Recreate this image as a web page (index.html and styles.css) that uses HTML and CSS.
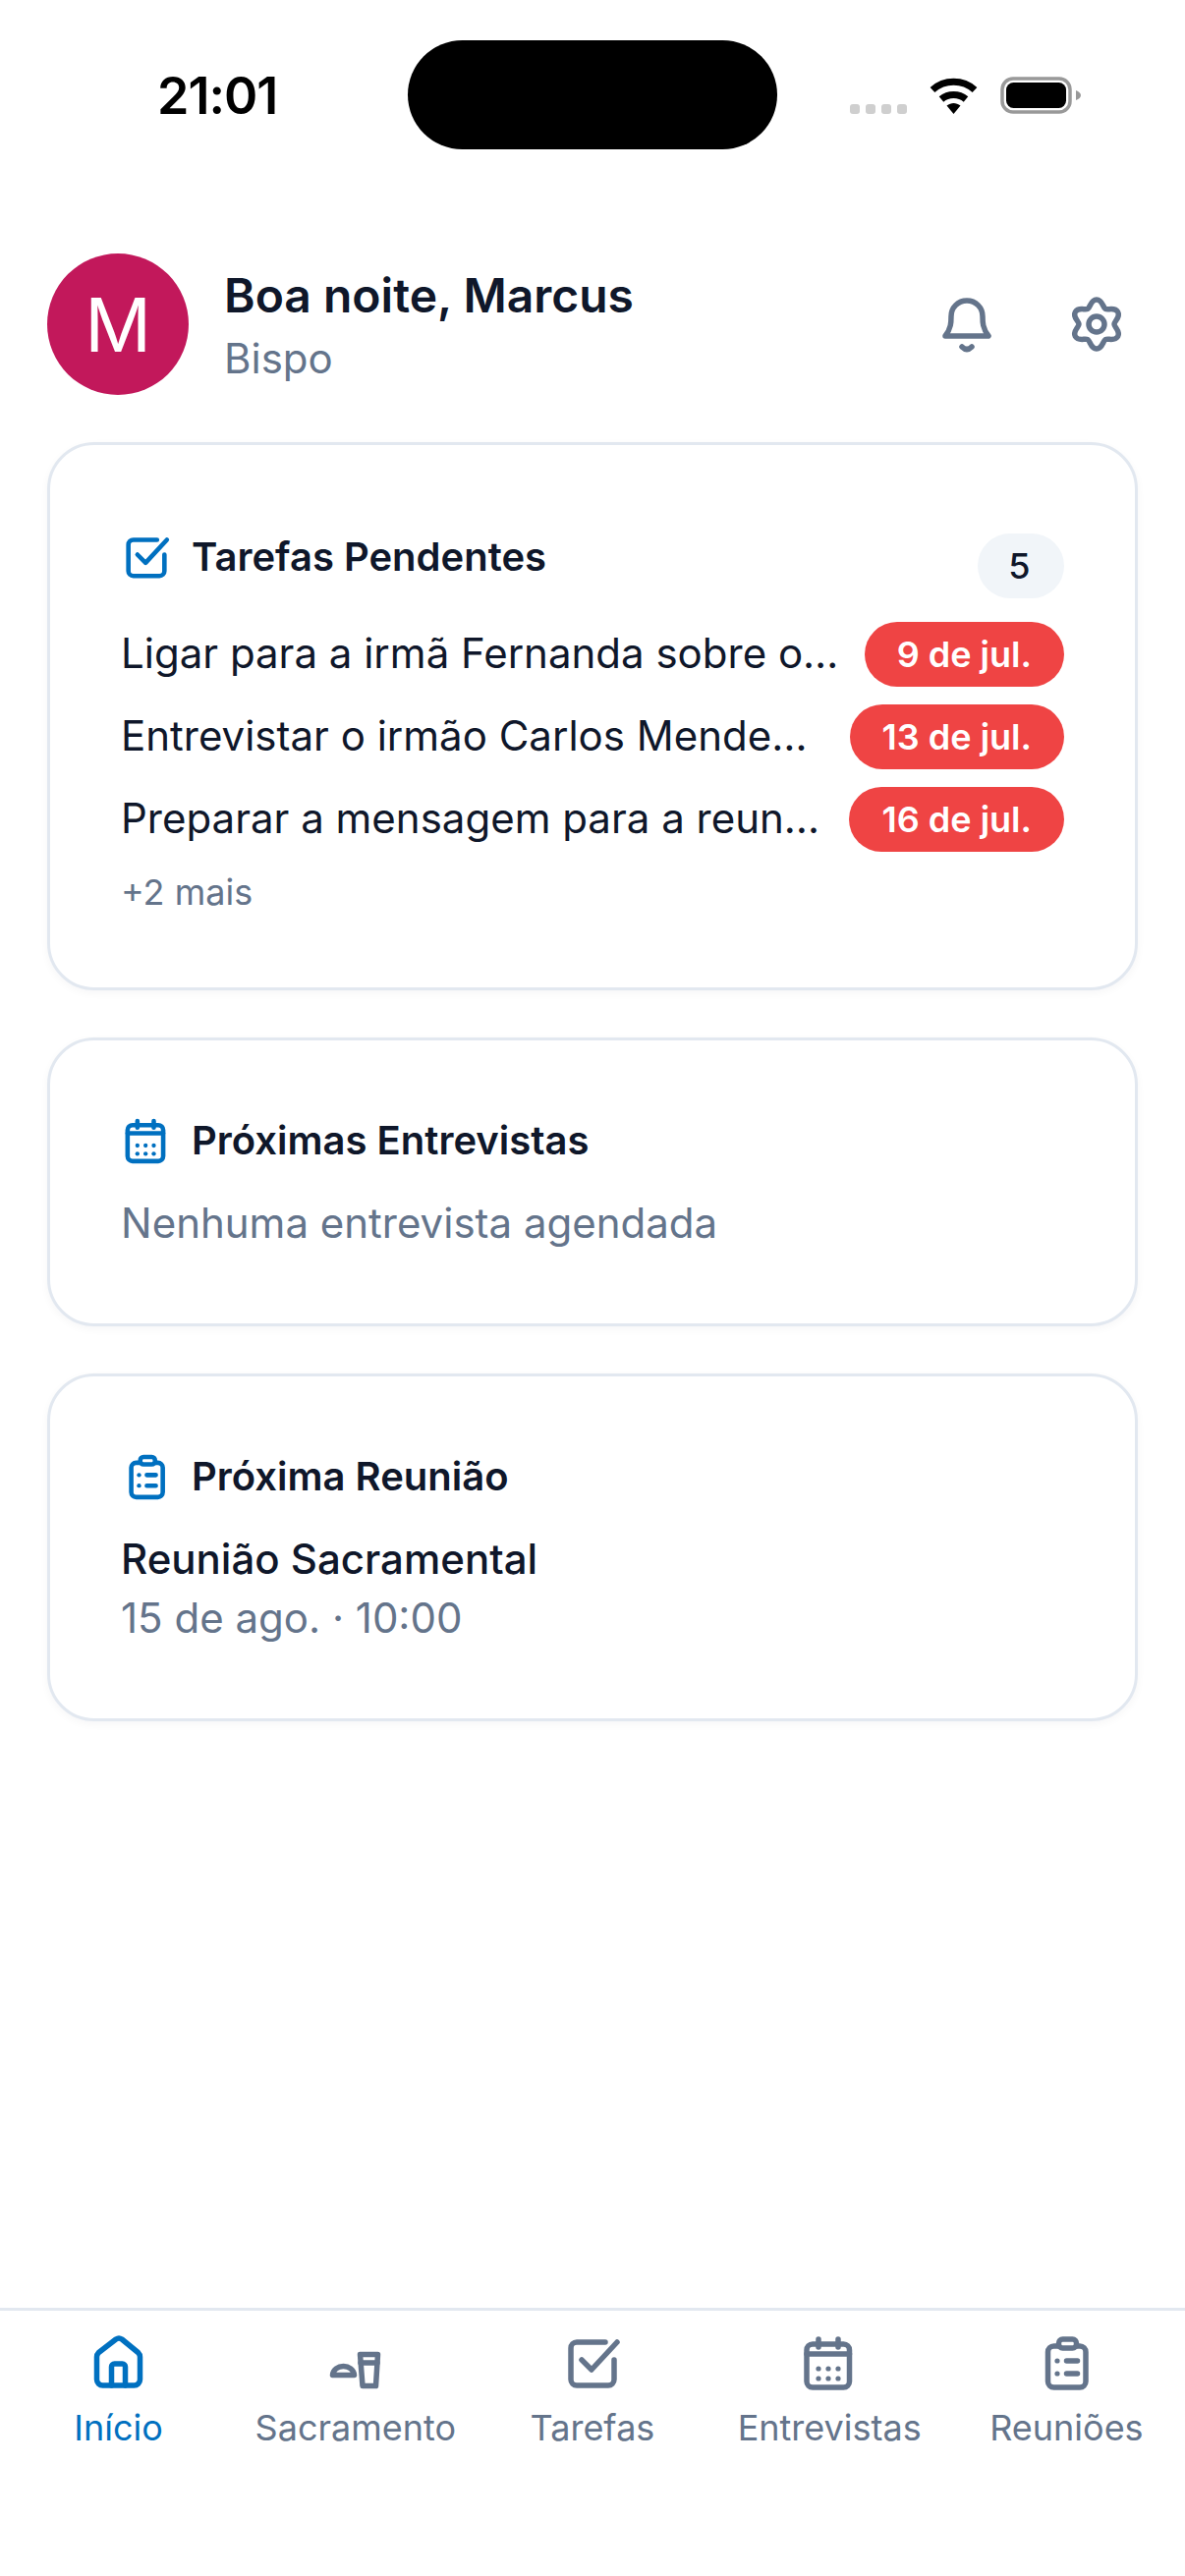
FILE: index.html
```html
<!DOCTYPE html>
<html lang="pt">
<head>
<meta charset="utf-8">
<title>Início</title>
<link rel="stylesheet" href="styles.css">
</head>
<body>
<svg class="sprite" xmlns="http://www.w3.org/2000/svg">
  <symbol id="i-home" viewBox="0 0 72 72"><path d="M13.5 30Q13.5 27.5 15.5 25.5L33 12Q36 10 39 12L55.5 25.5Q57.5 27.5 57.5 30V53A6 6 0 0 1 51.5 59H19.5A6 6 0 0 1 13.5 53Z"/><path d="M28.5 59V40A3 3 0 0 1 31.5 37H39.5A3 3 0 0 1 42.5 40V59"/></symbol>
  <symbol id="i-sacrament" viewBox="0 0 72 72"><path d="M12.5 48.5H34.5C34 43 29 39.5 23.5 39.5C18 39.5 13 43 12.5 48.5Z"/><path d="M40.5 27.5H58.5L56.5 59.5H43Z"/><path d="M41 36H58"/></symbol>
  <symbol id="i-check" viewBox="0 0 72 72"><path d="M49 15H20A6 6 0 0 0 14 21V53A6 6 0 0 0 20 59H52A6 6 0 0 0 58 53V33"/><path d="M25 33L35 43L61 15"/></symbol>
  <symbol id="i-calendar" viewBox="0 0 72 72"><rect x="13" y="17" width="43.5" height="44" rx="6"/><path d="M13 27H56.5M25 12V20M45 12V20"/><g class="dots"><circle cx="25" cy="42" r="2.6"/><circle cx="35" cy="42" r="2.6"/><circle cx="45" cy="42" r="2.6"/><circle cx="25" cy="52" r="2.6"/><circle cx="35" cy="52" r="2.6"/><circle cx="45" cy="52" r="2.6"/></g></symbol>
  <symbol id="i-clipboard" viewBox="0 0 72 72"><path d="M28 19H23.5A6 6 0 0 0 17.5 25V55A6 6 0 0 0 23.5 61H50A6 6 0 0 0 56 55V25A6 6 0 0 0 50 19H47"/><rect x="28.5" y="12" width="18" height="9" rx="4"/><path d="M36.5 34H47.5M36.5 47H47.5"/><g class="dots"><circle cx="27" cy="34" r="2.6"/><circle cx="27" cy="47" r="2.6"/></g></symbol>
</svg>

<div class="screen">
  <div class="status">
    <span class="clock">21:01</span>
    <span class="island"></span>
    <span class="sys">
      <span class="signal"><i></i><i></i><i></i><i></i></span>
      <svg class="wifi" viewBox="0 0 51 38"><path class="wifi-arc" d="M4 13.500C16 2.500 35 2.500 47 13.500"/><path class="wifi-arc" d="M13 23C20 17 31 17 38 23"/><path class="wifi-dot" d="M18.500 29.500C23 26 28 26 32.500 29.500L25.500 38Z"/></svg>
      <svg class="battery" viewBox="0 0 82 38"><rect class="batt-shell" x="2" y="2" width="69" height="34" rx="11"/><rect class="batt-fill" x="6" y="6" width="61" height="26" rx="7.500"/><path class="batt-nub" d="M77 14C80 15 82 17 82 19C82 21 80 23 77 24Z"/></svg>
    </span>
  </div>

  <header class="top">
    <div class="avatar">M</div>
    <div class="who">
      <div class="hello">Boa noite, Marcus</div>
      <div class="role">Bispo</div>
    </div>
    <div class="actions">
      <svg class="glyph" viewBox="0 0 72 72"><path d="M14 48C20 40 20 34 20 28C20 19 27 12 36 12C45 12 52 19 52 28C52 34 52 40 58 48Z"/><path d="M31 59Q36 64 41 59"/></svg>
      <svg class="glyph" viewBox="0 0 72 72"><path d="M36 11C42 11 42.400 18.900 45 20.400C47.600 21.900 54.650 18.300 57.650 23.500C60.650 28.700 54 33 54 36C54 39 60.650 43.300 57.650 48.500C54.650 53.700 47.600 50.100 45 51.600C42.400 53.100 42 61 36 61C30 61 29.600 53.100 27 51.600C24.400 50.100 17.350 53.700 14.350 48.500C11.350 43.300 18 39 18 36C18 33 11.350 28.700 14.350 23.500C17.350 18.300 24.400 21.900 27 20.400C29.600 18.900 30 11 36 11Z"/><circle cx="36" cy="36" r="8"/></svg>
    </div>
  </header>

  <main class="cards">
    <section class="card">
      <div class="card-head">
        <div class="title-row">
          <svg class="card-icon"><use href="#i-check"/></svg>
          <h2 class="card-title">Tarefas Pendentes</h2>
        </div>
        <span class="count">5</span>
      </div>
      <ul class="tasks">
        <li class="task"><span class="task-name">Ligar para a irmã Fernanda sobre o…</span><span class="due">9 de jul.</span></li>
        <li class="task"><span class="task-name">Entrevistar o irmão Carlos Mende…</span><span class="due">13 de jul.</span></li>
        <li class="task"><span class="task-name">Preparar a mensagem para a reun…</span><span class="due">16 de jul.</span></li>
      </ul>
      <div class="more">+2 mais</div>
    </section>

    <section class="card">
      <div class="title-row">
        <svg class="card-icon"><use href="#i-calendar"/></svg>
        <h2 class="card-title">Próximas Entrevistas</h2>
      </div>
      <p class="line line--muted line--first">Nenhuma entrevista agendada</p>
    </section>

    <section class="card">
      <div class="title-row">
        <svg class="card-icon"><use href="#i-clipboard"/></svg>
        <h2 class="card-title">Próxima Reunião</h2>
      </div>
      <p class="line line--strong line--first">Reunião Sacramental</p>
      <p class="line line--muted">15 de ago. · 10:00</p>
    </section>
  </main>

  <nav class="tabs">
    <a class="tab tab--on"><svg class="tab-icon"><use href="#i-home"/></svg><span>Início</span></a>
    <a class="tab"><svg class="tab-icon"><use href="#i-sacrament"/></svg><span>Sacramento</span></a>
    <a class="tab"><svg class="tab-icon"><use href="#i-check"/></svg><span>Tarefas</span></a>
    <a class="tab"><svg class="tab-icon"><use href="#i-calendar"/></svg><span>Entrevistas</span></a>
    <a class="tab"><svg class="tab-icon"><use href="#i-clipboard"/></svg><span>Reuniões</span></a>
  </nav>
</div>
</body>
</html>
```
FILE: styles.css
```css
* { box-sizing: border-box; }
html, body { margin: 0; padding: 0; background: #fff; }
body { font-family: Inter, "Noto Sans", sans-serif; color: #0f172a; }
.sprite { display: none; }
symbol path, symbol rect { fill: none; stroke: currentColor; stroke-width: 5.500; stroke-linecap: round; stroke-linejoin: round; }
symbol circle { fill: currentColor; stroke: none; }

.screen { width: 1206px; height: 2622px; display: flex; flex-direction: column; }

/* status bar */
.status { height: 258px; padding-top: 41px; display: grid; grid-template-columns: 415px 376px 1fr; align-items: start; flex: none; }
.clock { padding: 27px 0 0 160px; font-size: 52px; line-height: 60px; font-weight: 600; color: #000; letter-spacing: -1px; }
.island { height: 111px; background: #000; border-radius: 56px; }
.sys { display: flex; align-items: flex-start; padding: 37px 0 0 74px; }
.signal { display: flex; gap: 6px; margin-top: 28px; margin-right: 22px; }
.signal i { width: 10px; height: 10px; border-radius: 3px; background: #cfcfcf; }
.wifi { width: 51px; height: 38px; margin-right: 22px; }
.wifi-arc { fill: none; stroke: #000; stroke-width: 7; }
.wifi-dot { fill: #000; }
.battery { width: 82px; height: 38px; }
.batt-shell { fill: none; stroke: #999; stroke-width: 3.500; }
.batt-fill { fill: #000; }
.batt-nub { fill: #999; }

/* greeting */
.top { display: flex; align-items: center; height: 144px; padding: 0 54px 0 48px; flex: none; }
.avatar { width: 144px; height: 144px; border-radius: 50%; background: #c2185b; color: #fff; font-size: 75px; display: flex; align-items: center; justify-content: center; flex: none; }
.who { margin-left: 36px; padding-top: 4px; flex: 1; }
.hello { font-size: 48px; line-height: 60px; font-weight: 600; color: #0f172a; }
.role { font-size: 42px; line-height: 56px; margin-top: 6px; color: #64748b; }
.actions { display: flex; gap: 60px; }
.glyph { width: 72px; height: 72px; fill: none; stroke: #64748b; stroke-width: 5.500; stroke-linecap: round; stroke-linejoin: round; }

/* cards */
.cards { flex: 1; padding: 48px 48px 0; display: flex; flex-direction: column; gap: 48px; }
.card { border: 3px solid #e2e8f0; border-radius: 48px; background: #fff; padding: 72px; box-shadow: 0 3px 8px rgba(15, 23, 42, .04); }
.card-head { display: flex; justify-content: space-between; align-items: center; height: 84px; }
.title-row { display: flex; align-items: center; height: 60px; gap: 16px; }
.card-icon { width: 60px; height: 60px; margin-left: -4px; color: #0070c0; flex: none; }
.card-title { margin: 0; font-size: 40px; line-height: 60px; font-weight: 600; color: #0f172a; }
.count { align-self: flex-end; width: 88px; height: 66px; padding-right: 3px; border-radius: 33px; background: #f1f5f9; font-size: 36px; font-weight: 500; line-height: 66px; text-align: center; color: #0f172a; }

.tasks { list-style: none; margin: 24px 0 0; padding: 0; display: flex; flex-direction: column; gap: 18px; }
.task { display: flex; justify-content: space-between; align-items: center; height: 66px; }
.task-name { font-size: 42px; white-space: nowrap; color: #0f172a; padding-bottom: 3px; }
.due { height: 66px; padding: 0 33px; border-radius: 33px; background: #ef4444; color: #fff; font-size: 36px; font-weight: 600; line-height: 66px; }
.more { margin-top: 16px; font-size: 36px; line-height: 50px; color: #64748b; }

.line { margin: 0; font-size: 42px; line-height: 60px; color: #0f172a; }
.line--first { margin-top: 24px; }
.line--muted { color: #64748b; }
.line--strong { font-weight: 500; }

/* tab bar */
.tabs { height: 273px; border-top: 3px solid #e2e8f0; padding-top: 17px; display: grid; grid-template-columns: repeat(5, 1fr); flex: none; }
.tab { display: flex; flex-direction: column; align-items: center; gap: 8px; color: #64748b; font-size: 36px; line-height: 44px; white-space: nowrap; }
.tab-icon { width: 72px; height: 72px; flex: none; }
.tab--on { color: #0070c0; }
```
